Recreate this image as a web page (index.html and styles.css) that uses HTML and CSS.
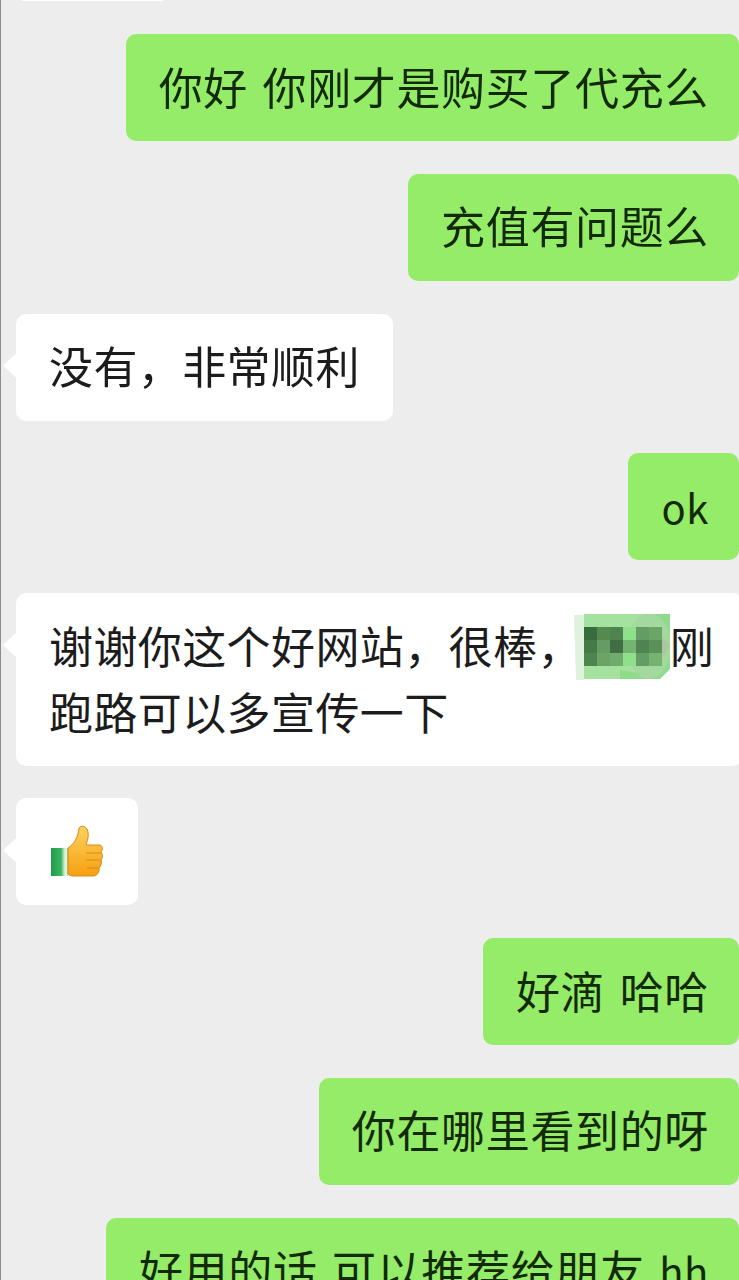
FILE: index.html

```html
<!DOCTYPE html>
<html lang="zh-CN">

<head>
    <meta charset="UTF-8">
    <meta name="viewport" content="width=device-width, initial-scale=1.0">
    <title>聊天记录</title>
    <link rel="stylesheet" href="styles.css">
</head>

<body>
    <div class="chat">
        <div class="prev-bubble"></div>

        <div class="bubble mine">你好 你刚才是购买了代充么</div>
        <div class="bubble mine">充值有问题么</div>
        <div class="bubble theirs">没有，非常顺利</div>
        <div class="bubble mine"><span class="latin">ok</span></div>
        <div class="bubble theirs wide">谢谢你这个好网站，很棒，<svg class="mosaic" viewBox="0 0 96 66" aria-hidden="true">
                <path d="M0 1H12L14 60L10 66H2Z" fill="#dff2dd" />
                <path d="M10 0H96V55L86 65H10Z" fill="#8edc8a" />
                <path d="M10 0H70C76 6 78 55 70 60L46 56V65H10Z" fill="#a5e2a0" />
                <ellipse cx="75" cy="32" rx="22" ry="33" fill="#a3d89f" />
                <path d="M49 13H62V52H49Z" fill="#8ee08a" />
                <path d="M10 13H23V26H10Z" fill="#386b3e" />
                <path d="M23 13H36V26H23Z" fill="#56894f" />
                <path d="M36 13H49V26H36Z" fill="#4f8450" />
                <path d="M10 26H23V39H10Z" fill="#457a47" />
                <path d="M23 26H36V39H23Z" fill="#659c64" />
                <path d="M36 26H49V39H36Z" fill="#3f6e44" />
                <path d="M10 39H23V52H10Z" fill="#4f8450" />
                <path d="M23 39H36V52H23Z" fill="#6aa567" />
                <path d="M36 39H49V52H36Z" fill="#6fac6c" />
                <path d="M49 26H62V39H49Z" fill="#74b470" />
                <path d="M62 13H75V26H62Z" fill="#659c64" />
                <path d="M75 13H88V26H75Z" fill="#6aa567" />
                <path d="M62 26H75V39H62Z" fill="#4f8450" />
                <path d="M75 26H88V39H75Z" fill="#5b9159" />
                <path d="M62 39H75V52H62Z" fill="#659c64" />
                <path d="M75 39H88V52H75Z" fill="#74b470" />
                <path d="M88 22L96 32L88 44Z" fill="#a9c7a2" />
            </svg>刚<br>跑路可以多宣传一下</div>
        <div class="bubble theirs thumb-bubble">
            <svg class="thumb" viewBox="0 0 52 52" aria-hidden="true">
                <defs>
                    <linearGradient id="hand" x1="0" y1="0" x2="0" y2="1">
                        <stop offset="0" stop-color="#ffd25e" />
                        <stop offset="1" stop-color="#f5a010" />
                    </linearGradient>
                    <linearGradient id="cuff" x1="0" y1="0" x2="1" y2="0">
                        <stop offset="0" stop-color="#1f9c4a" />
                        <stop offset="0.6" stop-color="#3bb564" />
                        <stop offset="0.78" stop-color="#c9ecc6" />
                        <stop offset="0.9" stop-color="#eafaea" />
                        <stop offset="1" stop-color="#7fd096" />
                    </linearGradient>
                </defs>
                <path d="M0 23H17V51H0Z" fill="url(#cuff)" />
                <path d="M17 23C23 19 27 13 28 3C30 0 36 1 37 7C38 12 36 16 35 20H49C52 21 52 25 50 27C52 30 52 33 50 35C51 38 50 41 48 43C49 47 46 51 42 51H22C20 51 18 50 17 49Z" fill="url(#hand)" stroke="#d98a1a" stroke-width="1" />
                <path d="M35 28H50M35 35H50M36 43H48" fill="none" stroke="#dc8a16" stroke-width="1" />
            </svg>
        </div>
        <div class="bubble mine">好滴 哈哈</div>
        <div class="bubble mine">你在哪里看到的呀</div>
        <div class="bubble mine">好用的话 可以推荐给朋友 <span class="latin">hh</span></div>
    </div>
</body>

</html>
```

FILE: styles.css

```css
html,
body {
    margin: 0;
    padding: 0;
    height: 100%;
    overflow: hidden;
}

body {
    background-color: #ededed;
    border-left: 1px solid #8d8d8d;
    box-sizing: border-box;
    font-family: "Noto Sans CJK SC", "Noto Sans", sans-serif;
}

.chat {
    display: flex;
    flex-direction: column;
    gap: 32.75px;
    filter: blur(0.4px);
}

.prev-bubble {
    width: 141px;
    height: 1.25px;
    margin-left: 21px;
    background-color: #fff;
}

.bubble {
    position: relative;
    box-sizing: border-box;
    min-height: 107px;
    padding: 18.5px 30px 22.5px 33px;
    border-radius: 10px;
    font-size: 44px;
    line-height: 66px;
    letter-spacing: 0.65px;
    word-spacing: 4px;
    white-space: nowrap;
    color: #1c1c1c;
}

.mine {
    align-self: flex-end;
    background-color: #95ec69;
    color: #132a08;
}

.theirs {
    align-self: flex-start;
    margin-left: 15px;
    padding-right: 33px;
    letter-spacing: 0.4px;
    background-color: #fff;
}

.theirs::before {
    content: "";
    position: absolute;
    left: -13px;
    top: 39px;
    width: 14px;
    height: 26px;
    background-color: #fff;
    clip-path: polygon(100% 0, 0 50%, 100% 100%);
}

.wide {
    padding-right: 29px;
    padding-bottom: 22px;
}

.latin {
    font-size: 40px;
    line-height: 1;
}

.mosaic {
    display: inline-block;
    width: 96px;
    height: 66px;
    vertical-align: top;
    margin: 2px 0 -2px -8px;
}

.thumb-bubble {
    width: 122px;
}

.thumb {
    display: block;
    width: 52px;
    height: 52px;
    margin: 8px 0 0 2px;
}
```
